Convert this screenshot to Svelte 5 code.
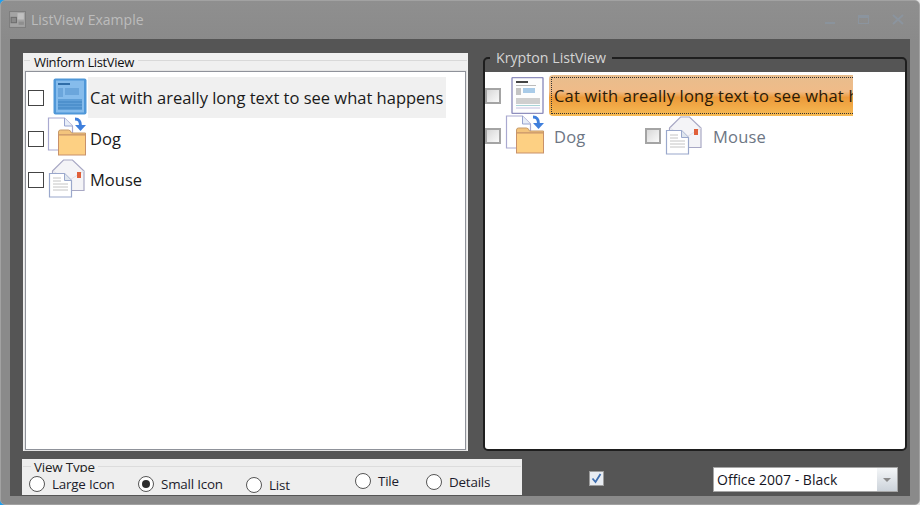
<script>
  let kind = $state("small");
  let theme = "Office 2007 - Black";

  const views = [
    { id: "large", label: "Large Icon", cls: "r-large" },
    { id: "small", label: "Small Icon", cls: "r-small" },
    { id: "list", label: "List", cls: "r-list" },
    { id: "tile", label: "Tile", cls: "r-tile" },
    { id: "details", label: "Details", cls: "r-details" },
  ];
  const longText = "Cat with areally long text to see what happens";
</script>

{#snippet docIcon(blue)}
  <svg class="ico-doc" viewBox="0 0 34 37" width="34" height="37">
    {#if blue}
      <rect x="0.5" y="0.5" width="33" height="36" rx="2" fill="#4f97d8" />
      <rect x="3" y="2.5" width="28" height="32" fill="#86bcec" />
      <rect x="5" y="5" width="12" height="2" fill="#2f6da8" />
      <rect x="5" y="10" width="5" height="9" fill="#6ba6dc" />
      <rect x="12" y="10" width="14" height="7" fill="#6ba6dc" />
      <rect x="5" y="21" width="24" height="11" fill="#5f9fd8" />
      <path d="M5 24h24M5 27h24M5 30h24" stroke="#3f83c2" stroke-width="1" />
    {:else}
      <rect x="1" y="0.5" width="31" height="36" rx="1" fill="#fdfdfd" stroke="#8f8fbe" stroke-width="1.4" />
      <rect x="5" y="4" width="12" height="2" fill="#444" />
      <rect x="5" y="8" width="20" height="1" fill="#bbb" />
      <rect x="5" y="11" width="5" height="7" fill="#c4c4c4" />
      <rect x="12" y="11" width="12" height="5" fill="#a9cbe8" />
      <rect x="5" y="21" width="24" height="6" fill="#cfcfcf" />
      <path d="M5 28.5h24" stroke="#a8d4d8" />
      <path d="M5 31h24" stroke="#c4bfe0" />
    {/if}
  </svg>
{/snippet}

{#snippet folderIcon()}
  <svg class="ico-big" viewBox="0 0 40 40" width="40" height="40">
    <path d="M1.500 1h16l8 8v24h-24z" fill="#fff" stroke="#a9a9d0" stroke-width="1.2" />
    <path d="M17.500 1v8h8" fill="#e8eef8" stroke="#98a4d0" stroke-width="1" />
    <path d="M28 2c4 0 5.500 2 5.500 7" fill="none" stroke="#3f7fdc" stroke-width="3" />
    <path d="M28 8h11l-5.500 6z" fill="#3f7fdc" />
    <path d="M11.500 18v-3q0-2 2-2h8q2 0 3 3h14v2z" fill="#f3c47c" stroke="#c79a6a" stroke-width="1" />
    <rect x="11.500" y="18" width="27" height="20" fill="#fdd083" stroke="#c8916a" stroke-width="1" />
  </svg>
{/snippet}

{#snippet mailIcon()}
  <svg class="ico-big" viewBox="0 0 40 40" width="40" height="40">
    <path d="M5.500 13l11-11h9l11.500 11v19.500h-31.500z" fill="#f4f4f7" stroke="#a8a8c4" stroke-width="1.2" />
    <path d="M6 13l15 10 16-10" fill="none" stroke="#e0e0e8" />
    <rect x="30" y="14" width="4" height="6" fill="#e0603a" />
    <path d="M2.500 15.500h15l7 7v16.500h-22z" fill="#fff" stroke="#9aa8cc" stroke-width="1.2" />
    <path d="M17.500 15.500v7h7" fill="#dfe6ee" stroke="#9aa8cc" />
    <path d="M6 20h8M6 23h8M6 26h15M6 29h15M6 32h15" stroke="#c4c4c4" stroke-width="1" />
  </svg>
{/snippet}

<div class="window">
  <header class="titlebar">
    <svg class="app-icon" viewBox="0 0 16 16" width="17" height="17">
      <rect x="0.500" y="0.500" width="15" height="15" fill="#a4a4a4" stroke="#7e7e7e" />
      <rect x="2" y="6" width="5" height="5" fill="#8a8a8a" stroke="#6e6e6e" />
      <rect x="8" y="2" width="6" height="6" fill="#c0c0c0" />
      <rect x="9" y="10" width="5" height="3" fill="#8e8e8e" />
    </svg>
    <span class="title">ListView Example</span>
    <div class="caption-btns">
      <span class="btn-min"></span>
      <span class="btn-max"></span>
      <svg class="btn-close" viewBox="0 0 12 11" width="12" height="11">
        <path d="M1 1l10 9M11 1L1 10" stroke="#8b949e" stroke-width="2" />
      </svg>
    </div>
  </header>

  <main class="client">
    <div class="lists">
      <fieldset class="winform">
        <legend>Winform ListView</legend>
        <div class="listbox">
          <div class="row">
            <span class="check"></span>
            <span class="slot slot-doc">{@render docIcon(true)}</span>
            <span class="row-text selected">{longText}</span>
          </div>
          <div class="row">
            <span class="check"></span>
            <span class="slot">{@render folderIcon()}</span>
            <span class="row-text">Dog</span>
          </div>
          <div class="row">
            <span class="check"></span>
            <span class="slot">{@render mailIcon()}</span>
            <span class="row-text">Mouse</span>
          </div>
        </div>
      </fieldset>

      <fieldset class="krypton">
        <legend>Krypton ListView</legend>
        <div class="kbox">
          <div class="k-first">
            <span class="kcheck"></span>
            <span class="k-doc">{@render docIcon(false)}</span>
            <div class="k-selected"><span class="k-focus">{longText}</span></div>
          </div>
          <div class="k-second">
            <span class="kcheck"></span>
            <span class="k-slot">{@render folderIcon()}</span>
            <span class="k-label k-dog">Dog</span>
            <span class="kcheck"></span>
            <span class="k-slot k-slot-mail">{@render mailIcon()}</span>
            <span class="k-label">Mouse</span>
          </div>
        </div>
      </fieldset>
    </div>

    <div class="bottom">
      <fieldset class="viewtype">
        <legend>View Type</legend>
        <div class="radios">
          {#each views as v}
            <button class="radio {v.cls}" onclick={() => (kind = v.id)}>
              <span class="dot" class:on={kind === v.id}></span>
              <span class="r-label">{v.label}</span>
            </button>
          {/each}
        </div>
      </fieldset>
      <span class="bottom-check">
        <svg viewBox="0 0 11 11" width="11" height="11"><path d="M1.500 5.500l3 3.500 5-8" fill="none" stroke="#3f6fb0" stroke-width="1.800" /></svg>
      </span>
      <div class="combo">
        <span class="combo-text">{theme}</span>
        <span class="combo-arrow"></span>
      </div>
    </div>
  </main>
</div>

<style>
  :global(body) {
    margin: 0;
    background: linear-gradient(90deg, #1e9ff0 50%, #e6e6e6 50%);
  }
  .window {
    width: 920px;
    height: 505px;
    box-sizing: border-box;
    display: flex;
    flex-direction: column;
    overflow: hidden;
    background: linear-gradient(#8f8f8f, #8a8a8a 40px, #8a8a8a);
    border: 1px solid #a2a2a2;
    border-radius: 5px;
    font-family: "Open Sans", sans-serif;
  }
  .titlebar {
    height: 38px;
    flex: none;
    display: flex;
    align-items: center;
    padding: 0 0 2px 8px;
    box-sizing: border-box;
  }
  .app-icon {
    margin-right: 5px;
  }
  .title {
    font-size: 14px;
    color: #bcbcbc;
  }
  .caption-btns {
    margin-left: auto;
    display: flex;
    align-items: center;
    margin-right: 15px;
    gap: 23px;
  }
  .btn-min {
    width: 10px;
    height: 2px;
    background: #8a939c;
    margin-top: 7px;
  }
  .btn-max {
    width: 11px;
    height: 9px;
    border: 1px solid #8b949e;
    border-top-width: 3px;
    box-sizing: border-box;
  }
  .client {
    flex: 1;
    margin: 0 9px 8px;
    background: #555555;
    display: flex;
    flex-direction: column;
    min-height: 0;
    padding: 0 0 0 13px;
    color: #111;
  }
  fieldset {
    margin: 0;
    min-width: 0;
  }
  .lists {
    display: flex;
    padding-top: 11px;
    height: 412px;
    box-sizing: border-box;
    flex: none;
  }
  .winform {
    width: 445px;
    height: 398px;
    box-sizing: border-box;
    margin-top: 3px;
    padding: 1px 2px 1px;
    background: #f0f0f0;
    border: none;
    position: relative;
    display: flow-root;
    flex: none;
  }
  .winform::before {
    content: "";
    position: absolute;
    left: 1px;
    right: 1px;
    top: 7px;
    height: 1px;
    background: #d9d9d9;
  }
  .winform legend {
    float: left;
    font-size: 13px;
    line-height: 16px;
    padding: 0 4px;
    margin: 0 0 1px 5px;
    background: #f0f0f0;
    position: relative;
    letter-spacing: -0.350px;
    white-space: nowrap;
  }
  .listbox {
    clear: both;
    height: 379px;
    box-sizing: border-box;
    background: #fff;
    border: 1px solid #8f929a;
    outline: 1px solid #e4e4e4;
    padding-top: 5px;
  }
  .row {
    display: flex;
    align-items: center;
    height: 41px;
    padding-left: 2px;
  }
  .check {
    width: 14px;
    height: 14px;
    border: 1px solid #444;
    background: #fff;
    flex: none;
    margin-right: 3px;
  }
  .slot {
    width: 41px;
    height: 41px;
    flex: none;
    display: flex;
    align-items: flex-start;
    margin-top: -2px;
  }
  .slot-doc {
    padding: 2px 0 0 6px;
    box-sizing: border-box;
  }
  .row-text {
    font-size: 16.500px;
    line-height: 41px;
    padding: 0 3px 0 2px;
    white-space: nowrap;
    color: #1a1a1a;
  }
  .row-text.selected {
    background: #f0f0f0;
  }
  .krypton {
    width: 424px;
    height: 401px;
    margin: 0 0 0 15px;
    box-sizing: border-box;
    border: 2px solid #1e1e1e;
    border-radius: 5px;
    padding: 6px 0 0;
    position: relative;
    flex: none;
  }
  .krypton legend {
    font-size: 14.200px;
    color: #d4d4d4;
    padding: 0 6px;
    margin-left: 5px;
    line-height: 16px;
  }
  .kbox {
    background: #fff;
    height: 377px;
    box-sizing: border-box;
    padding: 3px 0 0;
    border-radius: 0 0 3px 3px;
  }
  .k-first {
    display: flex;
    align-items: center;
    height: 41px;
  }
  .kcheck {
    width: 16px;
    height: 16px;
    flex: none;
    box-sizing: border-box;
    border: 2px solid #a4a4a4;
    background: linear-gradient(135deg, #d8d8d8, #fafafa);
  }
  .k-doc {
    margin-left: 10px;
    width: 38px;
    flex: none;
    display: flex;
  }
  .k-selected {
    width: 304px;
    height: 41px;
    box-sizing: border-box;
    border-radius: 4px 0 0 4px;
    background: linear-gradient(#e8bd8d 0, #f0bb88 40%, #ec9a3a 55%, #f7bb55 100%);
    overflow: hidden;
    padding: 2px 0 2px 2px;
  }
  .k-focus {
    display: block;
    height: 37px;
    box-sizing: border-box;
    line-height: 35px;
    font-size: 16.500px;
    letter-spacing: 0.200px;
    padding-left: 2px;
    white-space: nowrap;
    color: #2a1a08;
    border-top: 1px dotted #333;
    border-bottom: 1px dotted #333;
    border-left: 1px dotted #333;
    overflow: hidden;
  }
  .k-second {
    display: flex;
    align-items: center;
    height: 40px;
  }
  .k-slot {
    width: 40px;
    height: 40px;
    flex: none;
    margin: -2px 0 0 4px;
  }
  .k-slot-mail {
    margin-left: 3px;
  }
  .k-label {
    font-size: 16.500px;
    letter-spacing: 0.200px;
    color: #6d7684;
    margin-left: 9px;
  }
  .k-dog {
    width: 91px;
    flex: none;
  }
  .bottom {
    display: flex;
    height: 44px;
    flex: none;
  }
  .viewtype {
    width: 500px;
    height: 36px;
    margin: 8px 0 0 -1px;
    padding: 0;
    border: none;
    background: #eeeeee;
    position: relative;
    box-sizing: border-box;
    flex: none;
  }
  .viewtype::before {
    content: "";
    position: absolute;
    left: 1px;
    right: 1px;
    top: 7px;
    height: 1px;
    background: #dcdcdc;
  }
  .viewtype legend {
    float: left;
    font-size: 13.400px;
    line-height: 16px;
    padding: 0 3px;
    margin-left: 9px;
    height: 13px;
    overflow: hidden;
    background: #eee;
    position: relative;
    letter-spacing: -0.200px;
    color: #222;
  }
  .radios {
    clear: both;
    display: flex;
    position: relative;
    padding: 3px 0 0 7px;
  }
  .radio {
    display: flex;
    align-items: center;
    gap: 7px;
    background: none;
    border: none;
    padding: 0;
    font: inherit;
    color: inherit;
    height: 18px;
    flex: none;
  }
  .dot {
    width: 16px;
    height: 16px;
    box-sizing: border-box;
    border-radius: 50%;
    border: 1.500px solid #555;
    background: #fff;
    display: flex;
    align-items: center;
    justify-content: center;
  }
  .dot.on::after {
    content: "";
    width: 8px;
    height: 8px;
    border-radius: 50%;
    background: #2e2e2e;
  }
  .r-label {
    font-size: 13.400px;
    letter-spacing: -0.200px;
    color: #1c1c2c;
    white-space: nowrap;
  }
  .r-large {
    width: 109px;
  }
  .r-small {
    width: 108px;
  }
  .r-list {
    width: 109px;
    margin-top: 1px;
  }
  .r-tile {
    width: 71px;
    margin-top: -3px;
  }
  .r-details {
    margin-top: -2px;
  }
  .bottom-check {
    width: 15px;
    height: 15px;
    box-sizing: border-box;
    border: 1px solid #9c9c9c;
    background: #e8ecf2;
    margin: 20px 0 0 67px;
    display: flex;
    align-items: center;
    justify-content: center;
    flex: none;
  }
  .combo {
    width: 185px;
    height: 25px;
    box-sizing: border-box;
    margin: 16px 0 0 109px;
    background: #fff;
    border: 1px solid #a6a6a6;
    display: flex;
    align-items: center;
    padding-left: 3px;
    flex: none;
  }
  .combo-text {
    flex: 1;
    font-size: 14px;
    color: #15151f;
    white-space: nowrap;
  }
  .combo-arrow {
    width: 20px;
    height: 23px;
    background: linear-gradient(#f4f6f8, #ccd3da);
    position: relative;
  }
  .combo-arrow::after {
    content: "";
    position: absolute;
    left: 6px;
    top: 10px;
    border: 4px solid transparent;
    border-top: 4px solid #8a8a8a;
    border-bottom: none;
  }
</style>
